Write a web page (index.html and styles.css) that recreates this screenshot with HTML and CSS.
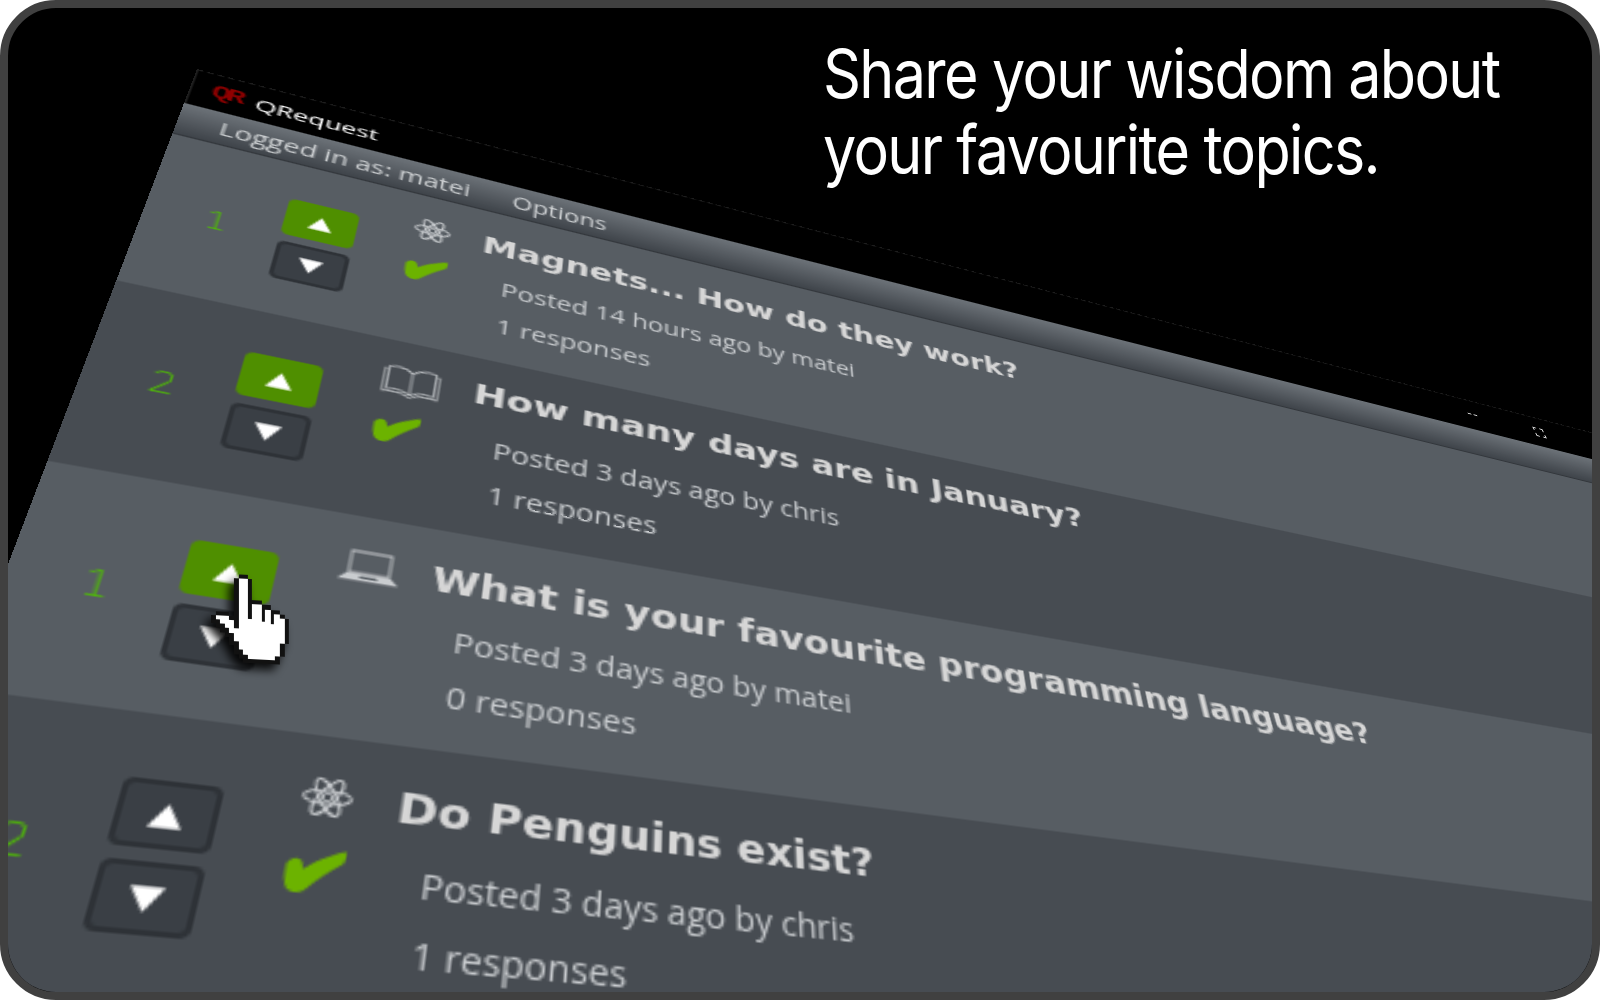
FILE: index.html
```
<!DOCTYPE html>
<html lang="en">
<head>
<meta charset="utf-8">
<title>QRequest</title>
<link rel="stylesheet" href="styles.css">
</head>
<body>
<svg class="defs" width="0" height="0" aria-hidden="true">
  <defs>
    <symbol id="up" viewBox="0 0 14 12"><polygon points="7,0 14,12 0,12"/></symbol>
    <symbol id="down" viewBox="0 0 14 12"><polygon points="0,0 14,0 7,12"/></symbol>
    <symbol id="check" viewBox="0 0 24 14" preserveAspectRatio="none"><path d="M0.500 5.500 Q3.500 2.500 6.500 4.500 L7.500 6.800 C11 4.500 17 2 23 0.300 Q24 0.100 24 1.500 C24 3 23.500 3.800 23 4.200 C17 7.500 12.500 10.500 9 13.400 Q6 14.500 3.500 13.700 Q0.600 13 0.500 8 Z"/></symbol>
    <symbol id="atom" viewBox="0 0 24 24">
      <g fill="none" stroke-width="1.2">
        <ellipse cx="12" cy="12" rx="11.200" ry="3.900"/>
        <ellipse cx="12" cy="12" rx="11.200" ry="3.900" transform="rotate(60 12 12)"/>
        <ellipse cx="12" cy="12" rx="11.200" ry="3.900" transform="rotate(120 12 12)"/>
        <circle cx="12" cy="12" r="2.200"/>
      </g>
    </symbol>
    <symbol id="book" viewBox="0 0 30 24">
      <g fill="none" stroke-width="0.8">
        <path d="M15 5 C12 1.500 7 1 3 2 V19 C7 18 12 18.500 15 21 C18 18.500 23 18 27 19 V2 C23 1 18 1.500 15 5 V21"/>
        <path d="M2 4 H1 V21 C7 20 12 20.500 15 23 C18 20.500 23 20 29 21 V4 H28"/>
      </g>
    </symbol>
    <symbol id="laptop" viewBox="0 0 30 22">
      <path class="laptop-screen" d="M5 1 H25 V15 H5 Z" fill="none" stroke-width="1"/>
      <path class="laptop-base" d="M4.500 15.500 H25.500 L30 20 H0 Z M11 17 L10.400 18.600 H19.600 L19 17 Z" fill-rule="evenodd"/>
    </symbol>
  </defs>
</svg>
<main class="frame">
  <h1 class="headline">Share your wisdom about<br>your favourite topics.</h1>
  <section class="app">
    <header class="titlebar">
      <span class="logo">QR</span>
      <span class="appname">QRequest</span>
      <span class="winctl winctl-min"></span>
      <span class="winctl winctl-max"></span>
    </header>
    <nav class="menubar">
      <span class="menu-user">Logged in as: matei</span>
      <span>Options</span>
    </nav>
    <article class="row row-light">
      <div class="score">1</div>
      <div class="vote">
        <button class="btn btn-on"><svg class="tri"><use href="#up"/></svg></button>
        <button class="btn"><svg class="tri"><use href="#down"/></svg></button>
      </div>
      <div class="marks">
        <svg class="icon icon-atom"><use href="#atom"/></svg>
        <svg class="check"><use href="#check"/></svg>
      </div>
      <div class="body">
        <h2 class="title">Magnets... How do they work?</h2>
        <p class="meta">Posted 14 hours ago by matei</p>
        <p class="meta">1 responses</p>
      </div>
    </article>
    <article class="row row-dark row-wide">
      <div class="score">2</div>
      <div class="vote">
        <button class="btn btn-on"><svg class="tri"><use href="#up"/></svg></button>
        <button class="btn"><svg class="tri"><use href="#down"/></svg></button>
      </div>
      <div class="marks">
        <svg class="icon icon-book"><use href="#book"/></svg>
        <svg class="check"><use href="#check"/></svg>
      </div>
      <div class="body">
        <h2 class="title">How many days are in January?</h2>
        <p class="meta">Posted 3 days ago by chris</p>
        <p class="meta">1 responses</p>
      </div>
    </article>
    <article class="row row-light">
      <div class="score">1</div>
      <div class="vote">
        <button class="btn btn-on"><svg class="tri"><use href="#up"/></svg></button>
        <button class="btn"><svg class="tri"><use href="#down"/></svg></button>
      </div>
      <div class="marks">
        <svg class="icon icon-laptop"><use href="#laptop"/></svg>
      </div>
      <div class="body">
        <h2 class="title">What is your favourite programming language?</h2>
        <p class="meta">Posted 3 days ago by matei</p>
        <p class="meta">0 responses</p>
      </div>
    </article>
    <article class="row row-dark">
      <div class="score">2</div>
      <div class="vote">
        <button class="btn"><svg class="tri"><use href="#up"/></svg></button>
        <button class="btn"><svg class="tri"><use href="#down"/></svg></button>
      </div>
      <div class="marks">
        <svg class="icon icon-atom"><use href="#atom"/></svg>
        <svg class="check"><use href="#check"/></svg>
      </div>
      <div class="body">
        <h2 class="title">Do Penguins exist?</h2>
        <p class="meta">Posted 3 days ago by chris</p>
        <p class="meta">1 responses</p>
      </div>
    </article>
  </section>
  <svg class="hand" viewBox="0 0 17 21" preserveAspectRatio="none" aria-hidden="true">
    <path class="hand-edge" d="M5 1H6V0H8V1H9V6H11V7H13V8H15V9H16V10H17V16H16V19H15V21H7V20H6V19H5V17H4V15H3V14H2V13H1V12H0V10H1V9H4V10H5Z"/>
    <path class="hand-fill" d="M6 1H8V7H11V8H13V9H15V10H16V16H15V19H14V20H8V19H7V18H6V16H5V14H4V13H3V12H2V11H1V10H4V11H5V13H6Z"/>
    <path class="hand-edge" d="M8 7H9V10.500H8ZM11 8H11.800V11H11ZM13 9H13.800V11.500H13Z"/>
  </svg>
</main>
</body>
</html>
```
FILE: styles.css
```
* { box-sizing: border-box; }
html, body { margin: 0; padding: 0; background: #fff; }
.defs { position: absolute; }
.frame {
  position: relative;
  width: 1600px;
  height: 1000px;
  overflow: hidden;
  background: #000;
  border: 8px solid #404040;
  border-radius: 56px;
}
.headline {
  position: relative;
  z-index: 2;
  width: 900px;
  margin: 28px 0 0 815px;
  font: 400 67px/76px Inter, sans-serif;
  letter-spacing: -1.9px;
  color: #fff;
  transform-origin: 0 0;
  transform: scaleX(0.885);
}
.app {
  position: absolute;
  left: 0;
  top: 0;
  width: 960px;
  height: 640px;
  background: #474c52;
  font-family: "Open Sans", sans-serif;
  transform-origin: 0 0;
  transform: matrix3d(2.1806, 0.5729, 0, 0.00042, -0.5739, 1.0509, 0, -0.000814, 0, 0, 1, 0, 189, 61, 0, 1);
}
.titlebar {
  position: relative;
  height: 30px;
  display: flex;
  align-items: center;
  padding-left: 9px;
  background: #000;
  border-top: 1px dashed #1e1e1e;
  border-left: 1px solid #1e1e1e;
  color: #fff;
  font-size: 13.300px;
}
.logo {
  width: 21px;
  font: 700 15px/1 "Liberation Mono", monospace;
  letter-spacing: -2px;
  color: #8f0000;
}
.winctl { position: absolute; }
.winctl-min { left: 804px; top: 13px; width: 8px; border-top: 1px dashed #ddd; }
.winctl-max { left: 861px; top: 10px; width: 9px; height: 9px; border: 1px dashed #ddd; }
.menubar {
  height: 26px;
  display: flex;
  align-items: center;
  gap: 22px;
  padding-left: 19px;
  background: linear-gradient(#6c7278, #3f444a);
  border-bottom: 1px solid #33373c;
  color: #cfd2d4;
  font-size: 13.700px;
}
.row {
  height: 110px;
  display: grid;
  grid-template-columns: 59px 33px 60px 1fr;
}
.row-light { background: #575d63; }
.row-dark { background: #474c52; }
.score {
  align-self: center;
  padding: 2px 0 0 3px;
  text-align: center;
  font: 200 17px/20px "DejaVu Sans", sans-serif;
  color: #4fc000;
}
.vote {
  display: flex;
  flex-direction: column;
  gap: 5px;
  padding-top: 27px;
}
.btn {
  display: flex;
  align-items: center;
  justify-content: center;
  width: 33px;
  height: 27px;
  padding: 0;
  background: #3a3f45;
  border: 2px solid #2e3237;
  border-radius: 4px;
}
.btn-on { background: #4f8f00; border-color: #4f8f00; }
.tri { width: 11px; height: 10px; fill: #fff; }
.marks {
  display: flex;
  flex-direction: column;
  align-items: center;
  gap: 9px;
  padding: 14px 0 0 9px;
}
.row-wide .marks { padding-left: 15px; }
.row-wide .check { margin-left: -5px; }
.icon { height: 24px; width: 24px; stroke: #c9cccf; fill: #c9cccf; flex: none; }
.icon-atom { width: 18px; height: 20px; margin-top: 2px; margin-bottom: 2px; }
.icon-book { width: 26px; }
.icon-laptop { width: 24px; height: 18px; margin-top: 4px; }
.laptop-base { stroke: none; }
.check { width: 20px; height: 18px; fill: #6cb300; flex: none; }
.body { padding-top: 17px; }
.row-wide .body { padding: 14px 0 0 6px; }
.title {
  margin: 0 0 12px;
  font: 700 17.800px/20px "DejaVu Sans", sans-serif;
  color: #d6d6d6;
}
.row-wide .title { margin-bottom: 15px; font-size: 18.200px; }
.meta {
  margin: 0 0 9px 12px;
  font-size: 13.700px;
  line-height: 18px;
  color: #c9cccf;
}
.hand {
  position: absolute;
  z-index: 3;
  left: 203px;
  top: 567px;
  width: 78px;
  height: 88px;
  transform: skewY(3deg);
  filter: drop-shadow(-5px 6px 5px rgba(0, 0, 0, 0.9));
  shape-rendering: crispEdges;
}
.hand-edge { fill: #111; }
.hand-fill { fill: #fff; }
```
